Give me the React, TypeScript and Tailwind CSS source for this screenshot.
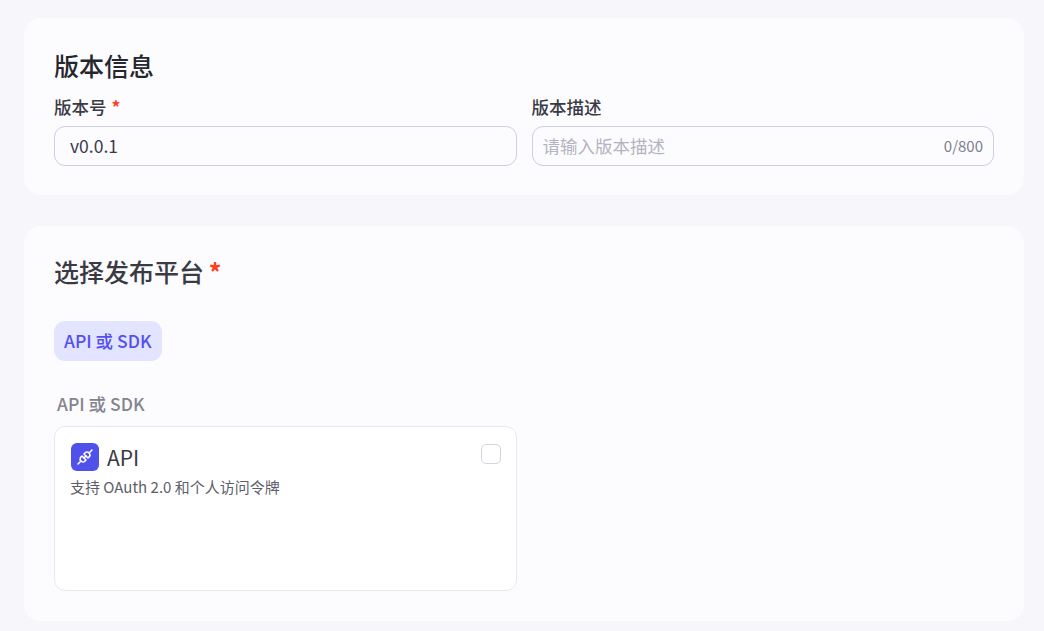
const font = "font-['Noto_Sans_CJK_SC','Noto_Sans',sans-serif]";

function Star({ className }: { className?: string }) {
  return <span className={`font-bold text-[#ff3d1f] ${className ?? ""}`}>*</span>;
}

function VersionCard() {
  return (
    <section className="rounded-[17px] bg-[#fcfcff] px-[30px] pt-[30px] pb-[29px]">
      <h2 className="text-[25px] leading-[34px] font-medium text-[#26262e]">版本信息</h2>
      <div className="mt-3 grid grid-cols-2 gap-[15px]">
        <div>
          <label className="mb-1.5 block h-[26px] text-[17.5px] leading-[26px] font-medium text-[#3a3a44]">
            版本号 <Star className="ml-px" />
          </label>
          <div className="flex h-10 items-center rounded-[11px] border border-[#cfcfe0] pl-[15px] text-[17.5px] text-[#3a3a48]">
            v0.0.1
          </div>
        </div>
        <div>
          <label className="mb-1.5 block h-[26px] text-[17.5px] leading-[26px] font-medium text-[#3a3a44]">版本描述</label>
          <div className="flex h-10 items-center justify-between rounded-[11px] border border-[#cfcfe0] pr-2.5 pl-[10px]">
            <span className="text-[17.5px] text-[#b4b4c0]">请输入版本描述</span>
            <span className="text-[15px] text-[#7d7d8e]">0/800</span>
          </div>
        </div>
      </div>
    </section>
  );
}

function PlatformCard() {
  return (
    <section className="rounded-[17px] bg-[#fcfcff] px-[30px] pt-[27px] pb-[30px]">
      <h2 className="text-[25px] leading-9 font-medium text-[#3a3a44]">
        选择发布平台 <Star className="-ml-px" />
      </h2>
      <div className="mt-8 flex">
        <span className="flex h-10 items-center rounded-[11px] bg-[#e3e4ff] px-2.5 text-[17.5px] font-medium text-[#5450f0]">
          API 或 SDK
        </span>
      </div>
      <div className="mt-[30px] h-[35px] pl-[3px] text-[17.5px] leading-[25px] font-medium text-[#84848f]">API 或 SDK</div>
      <div className="grid grid-cols-2 gap-[15px]">
        <div className="relative h-[165px] rounded-[11px] border border-[#e8e8f1] bg-white px-4 pt-4">
          <div className="flex items-center gap-2">
            <span className="flex h-7 w-7 items-center justify-center rounded-md bg-[#5050eb]">
              <svg width="20" height="20" viewBox="0 0 20 20" fill="none" stroke="white" strokeWidth="1.6" strokeLinecap="round" strokeLinejoin="round">
                <path d="M3 17l2.2-2.2" />
                <path d="M17 3l-2.2 2.2" />
                <path d="M9 7l4 4 1.6-1.6a3 3 0 0 0-4-4z" />
                <path d="M11 13L7 9l-1.6 1.6a3 3 0 0 0 4 4z" />
                <path d="M9 11l2-2" />
              </svg>
            </span>
            <span className="text-[21px] leading-7 text-[#3a3a44]">API</span>
          </div>
          <p className="mt-1.5 -ml-px text-[15px] leading-5 text-[#5e5e6a]">支持 OAuth 2.0 和个人访问令牌</p>
          <span className="absolute top-[17px] right-[15px] h-5 w-5 rounded-[5px] border border-[#d4d4e2] bg-white" />
        </div>
      </div>
    </section>
  );
}

export default function App() {
  return (
    <div className={`flex h-[631px] flex-col gap-[31px] overflow-hidden bg-[#f7f7fb] pt-[18px] pr-5 pl-6 ${font}`}>
      <VersionCard />
      <PlatformCard />
    </div>
  );
}
